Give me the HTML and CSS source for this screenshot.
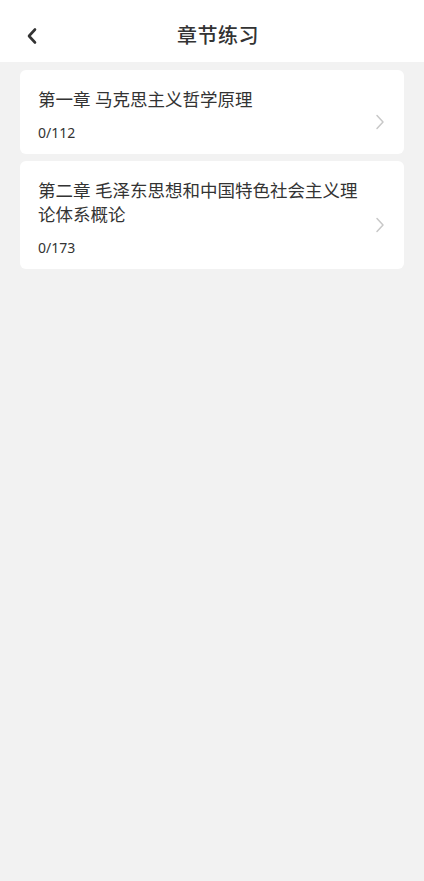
FILE: index.html
```html
<!DOCTYPE html>
<html lang="zh-CN">
<head>
    <meta charset="UTF-8">
    <meta name="viewport" content="width=device-width, initial-scale=1.0">
    <title>章节练习</title>
    <link rel="stylesheet" href="styles.css">
</head>
<body>
    <div class="header">
        <a class="back-btn" href="#">
            <svg width="12" height="18" viewBox="0 0 12 18">
                <path d="M9 2.5 L3 9 L9 15.5" fill="none" stroke="#333" stroke-width="2.6" stroke-linecap="round" stroke-linejoin="round"/>
            </svg>
        </a>
        <h1 class="title">章节练习</h1>
    </div>

    <div class="chapter-list">
        <div class="chapter">
            <div class="chapter-info">
                <div class="chapter-name">第一章 马克思主义哲学原理</div>
                <div class="chapter-count">0/112</div>
            </div>
            <svg class="arrow" width="10" height="16" viewBox="0 0 10 16">
                <path d="M2 1.5 L8 8 L2 14.5" fill="none" stroke="#c8c8c8" stroke-width="1.5" stroke-linecap="round" stroke-linejoin="round"/>
            </svg>
        </div>

        <div class="chapter">
            <div class="chapter-info">
                <div class="chapter-name">第二章 毛泽东思想和中国特色社会主义理论体系概论</div>
                <div class="chapter-count">0/173</div>
            </div>
            <svg class="arrow" width="10" height="16" viewBox="0 0 10 16">
                <path d="M2 1.5 L8 8 L2 14.5" fill="none" stroke="#c8c8c8" stroke-width="1.5" stroke-linecap="round" stroke-linejoin="round"/>
            </svg>
        </div>
    </div>
</body>
</html>
```

FILE: styles.css
```css
body {
    font-family: "Noto Sans", "Noto Sans CJK SC", sans-serif;
    background: #f2f2f2;
    margin: 0;
    padding: 0;
    min-height: 100vh;
    color: #333;
}

.header {
    height: 62px;
    background: #fff;
    display: flex;
    align-items: center;
    justify-content: center;
    padding-left: 12px;
    position: relative;
}

.back-btn {
    position: absolute;
    left: 26px;
    top: 27px;
    display: flex;
}

.title {
    margin: 6px 0 0;
    font-size: 20px;
    font-weight: 500;
    color: #333;
    letter-spacing: 0.5px;
}

.chapter-list {
    padding: 8px 20px;
    display: flex;
    flex-direction: column;
    gap: 7px;
}

.chapter {
    background: #fff;
    border-radius: 6px;
    padding: 17px 19px 11px 18px;
    display: flex;
    align-items: center;
}

.chapter-info {
    width: 325px;
}

.chapter-name {
    font-size: 17.5px;
    line-height: 24px;
    color: #333;
}

.chapter-count {
    font-size: 14px;
    line-height: 20px;
    margin-top: 12px;
    color: #333;
}

.arrow {
    margin-left: auto;
    margin-top: 13px;
}
```
